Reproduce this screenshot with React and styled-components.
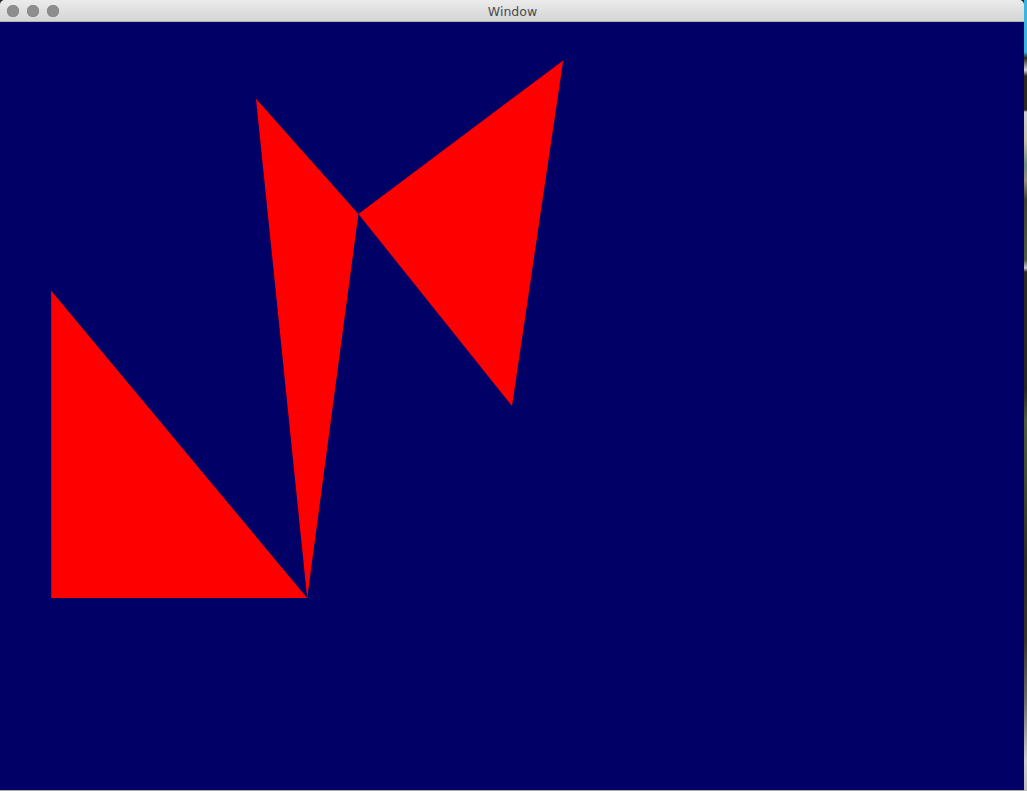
import React from "react";
import styled, { createGlobalStyle } from "styled-components";

const Global = createGlobalStyle`
  html, body { margin: 0; padding: 0; }
  body {
    width: 1027px;
    height: 791px;
    overflow: hidden;
    background: #2a2a22;
    font-family: "Liberation Sans", Arial, sans-serif;
  }
`;

const Desktop = styled.div`
  display: flex;
  width: 1027px;
  height: 791px;
`;

const Window = styled.div`
  width: 1024px;
  height: 791px;
  display: flex;
  flex-direction: column;
  border-radius: 5px 5px 0 0;
  overflow: hidden;
  background: #a9a9a9;
`;

const TitleBar = styled.div`
  height: 21px;
  flex: none;
  position: relative;
  display: flex;
  align-items: center;
  justify-content: center;
  background: linear-gradient(#ebebeb, #d5d5d5);
  border-bottom: 1px solid #b1b1b1;
`;

const Lights = styled.div`
  position: absolute;
  left: 7px;
  top: 5px;
  display: flex;
  gap: 8px;
`;

const Light = styled.span`
  width: 12px;
  height: 12px;
  border-radius: 50%;
  background: #8e8e8e;
  box-shadow: inset 0 0 0 0.5px #7b7b7b;
`;

const Title = styled.span`
  font-family: "Lucida Grande", "DejaVu Sans", "Liberation Sans", sans-serif;
  font-size: 12.5px;
  color: #4b4b4b;
  margin-left: 1px;
  margin-top: 1px;
`;

const Canvas = styled.svg`
  display: block;
  width: 1024px;
  height: 768px;
  flex: none;
  background: #000066;
`;

const Strip = styled.div`
  flex: 1;
  height: 791px;
  background: linear-gradient(
    #3db4de 0px,
    #3db4de 52px,
    #2b281e 58px,
    #d8d8d8 70px,
    #2b281e 76px,
    #2b281e 110px,
    #cfcfd2 112px,
    #c8c2a8 140px,
    #6b8a7a 165px,
    #9a9080 180px,
    #3c3e30 200px,
    #4d5a40 260px,
    #c9c9c9 268px,
    #2a2a20 272px,
    #262620 390px,
    #4a5a3a 420px,
    #3e4a30 480px,
    #2a2a22 560px,
    #353228 640px,
    #6a6a66 700px,
    #d0d0d0 760px,
    #bdbdbd 791px
  );
`;

const tris = [
  [
    [-0.9, 0.3],
    [-0.9, -0.5],
    [-0.4, -0.5],
  ],
  [
    [-0.5, 0.8],
    [-0.3, 0.5],
    [-0.4, -0.5],
  ],
  [
    [-0.3, 0.5],
    [0.1, 0.9],
    [0.0, 0.0],
  ],
];

const toPx = ([x, y]) => `${(x + 1) * 512},${(1 - y) * 384}`;

export default function App() {
  return (
    <>
      <Global />
      <Desktop>
        <Window>
          <TitleBar>
            <Lights>
              <Light />
              <Light />
              <Light />
            </Lights>
            <Title>Window</Title>
          </TitleBar>
          <Canvas viewBox="0 0 1024 768">
            {tris.map((t, i) => (
              <polygon key={i} points={t.map(toPx).join(" ")} fill="#ff0000" />
            ))}
          </Canvas>
        </Window>
        <Strip />
      </Desktop>
    </>
  );
}
